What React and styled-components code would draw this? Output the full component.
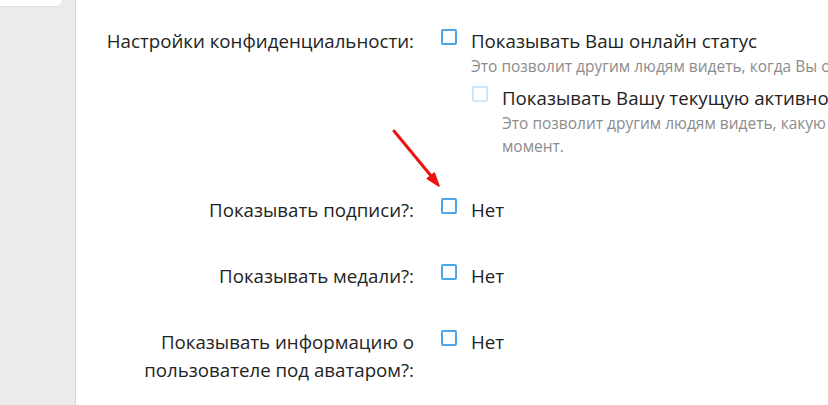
import React from 'react'
import styled, { createGlobalStyle } from 'styled-components'

const GlobalStyle = createGlobalStyle`
  html, body {
    margin: 0;
    padding: 0;
    background: #fff;
    overflow: hidden;
  }
  body {
    font-family: "Open Sans", "Noto Sans", sans-serif;
    color: #262626;
  }
`

const Page = styled.div`
  display: flex;
  width: 828px;
  height: 405px;
  overflow: hidden;
`

const Sidebar = styled.div`
  flex: 0 0 75px;
  background: #ebebeb;
  border-right: 1px solid #d6d6d6;
`

const SidebarTab = styled.div`
  width: 62px;
  height: 6px;
  background: #fff;
  border-bottom-right-radius: 7px;
  box-shadow: 0 0 0 1px #e2e2e2;
`

const Main = styled.div`
  position: relative;
  flex: 1;
  padding-top: 27px;
`

const Row = styled.div`
  display: grid;
  grid-template-columns: 338px 1fr;
  column-gap: 27px;
  margin-bottom: 38px;
`

const Label = styled.div`
  text-align: right;
  font-size: 18.7px;
  line-height: 28px;
  color: #232323;
`

const Options = styled.div`
  display: flex;
  flex-direction: column;
  white-space: nowrap;
`

const Option = styled.div`
  display: flex;
  align-items: flex-start;
  margin-left: ${p => (p.$nested ? '31px' : '0')};
  margin-top: ${p => (p.$nested ? '6px' : '0')};
`

const Box = styled.span`
  flex: 0 0 auto;
  box-sizing: border-box;
  width: 16px;
  height: 16px;
  margin-top: 2px;
  margin-right: 14px;
  border: 2px solid ${p => (p.$disabled ? '#cfe6f8' : '#4aa6e6')};
  border-radius: 2px;
  background: #fff;
`

const OptionBody = styled.div`
  display: flex;
  flex-direction: column;
`

const OptionText = styled.div`
  font-size: 18.7px;
  line-height: 28px;
  color: #232323;
`

const Hint = styled.div`
  font-size: 15.5px;
  line-height: 23px;
  color: #8c8c8c;
`

const Arrow = styled.svg`
  position: absolute;
  left: 314px;
  top: 126px;
  overflow: visible;
`

function Check({ label, hint, nested, disabled }) {
  return (
    <Option $nested={nested}>
      <Box $disabled={disabled} />
      <OptionBody>
        <OptionText>{label}</OptionText>
        {hint && <Hint>{hint}</Hint>}
      </OptionBody>
    </Option>
  )
}

export default function App() {
  return (
    <>
      <GlobalStyle />
      <Page>
        <Sidebar>
          <SidebarTab />
        </Sidebar>
        <Main>
          <Row>
            <Label>Настройки конфиденциальности:</Label>
            <Options>
              <Check
                label="Показывать Ваш онлайн статус"
                hint="Это позволит другим людям видеть, когда Вы онлайн."
              />
              <Check
                nested
                disabled
                label="Показывать Вашу текущую активность"
                hint={<>Это позволит другим людям видеть, какую страницу Вы просматриваете в данный<br />момент.</>}
              />
            </Options>
          </Row>
          <Row>
            <Label>Показывать подписи?:</Label>
            <Options>
              <Check label="Нет" />
            </Options>
          </Row>
          <Row>
            <Label>Показывать медали?:</Label>
            <Options>
              <Check label="Нет" />
            </Options>
          </Row>
          <Row>
            <Label>Показывать информацию о<br />пользователе под аватаром?:</Label>
            <Options>
              <Check label="Нет" />
            </Options>
          </Row>
          <Arrow width="50" height="66" viewBox="0 0 50 66">
            <line x1="4" y1="5" x2="42" y2="51" stroke="#ee1212" strokeWidth="3" strokeLinecap="round" />
            <polygon points="49,60 44.3,47.1 37.3,52.7" fill="#ee1212" stroke="#ee1212" strokeWidth="1.5" strokeLinejoin="round" />
          </Arrow>
        </Main>
      </Page>
    </>
  )
}
